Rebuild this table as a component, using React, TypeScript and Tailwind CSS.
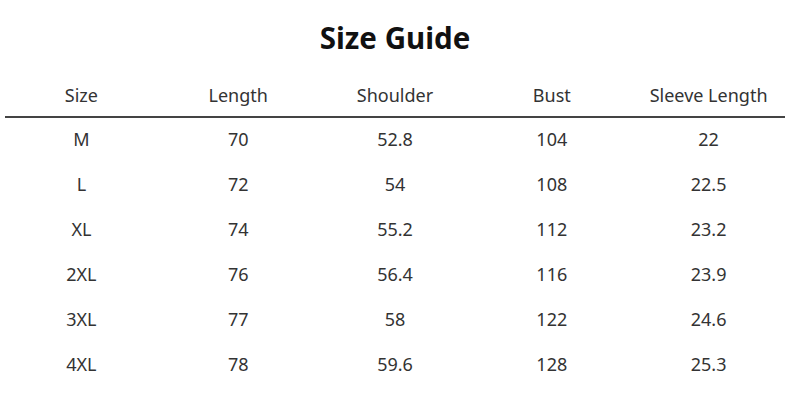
const headers = ["Size", "Length", "Shoulder", "Bust", "Sleeve Length"];

const rows = [
  ["M", "70", "52.8", "104", "22"],
  ["L", "72", "54", "108", "22.5"],
  ["XL", "74", "55.2", "112", "23.2"],
  ["2XL", "76", "56.4", "116", "23.9"],
  ["3XL", "77", "58", "122", "24.6"],
  ["4XL", "78", "59.6", "128", "25.3"],
];

export default function App() {
  return (
    <div
      className="w-[790px] h-[400px] bg-white text-[#333] overflow-hidden"
      style={{ fontFamily: "'Noto Sans', 'Open Sans', sans-serif" }}
    >
      <h1 className="pt-[16px] h-[68px] text-center text-[29.5px] font-bold leading-[44px] text-[#111]">
        Size Guide
      </h1>

      <div className="px-[3px]">
        <div className="grid grid-cols-5 h-[48px] items-center pt-[6px] text-[18px]">
          {headers.map((h) => (
            <div key={h} className="text-center">
              {h}
            </div>
          ))}
        </div>
      </div>
      <div className="ml-[5px] mr-[5px] h-[2px] bg-[#444]" />

      <div className="px-[3px] -mt-[1px]">
        {rows.map((r) => (
          <div key={r[0]} className="grid grid-cols-5 h-[45px] items-center text-[18px]">
            {r.map((v, i) => (
              <div key={i} className="text-center">
                {v}
              </div>
            ))}
          </div>
        ))}
      </div>
    </div>
  );
}
